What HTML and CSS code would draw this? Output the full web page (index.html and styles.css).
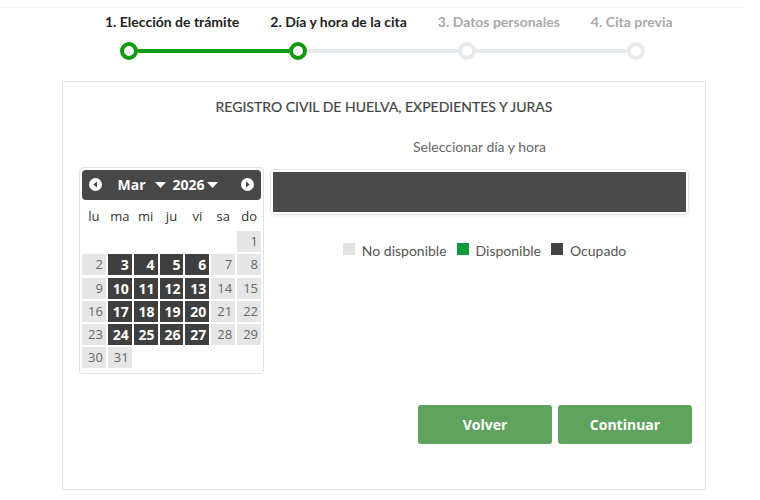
FILE: index.html
```html
<!DOCTYPE html>
<html lang="es">
<head>
    <meta charset="UTF-8">
    <meta name="viewport" content="width=device-width, initial-scale=1.0">
    <title>Cita previa - Registro Civil</title>
    <link rel="stylesheet" href="styles.css">
</head>
<body>
    <div class="franja"></div>

    <div class="pasos">
        <div class="pasos-textos">
            <span class="paso hecho">1. Elección de trámite</span>
            <span class="paso hecho">2. Día y hora de la cita</span>
            <span class="paso">3. Datos personales</span>
            <span class="paso">4. Cita previa</span>
        </div>
        <div class="pasos-barra">
            <span class="punto activo"></span>
            <span class="linea activa"></span>
            <span class="punto activo"></span>
            <span class="linea"></span>
            <span class="punto"></span>
            <span class="linea"></span>
            <span class="punto"></span>
        </div>
    </div>

    <main class="panel">
        <h1 class="titulo">REGISTRO CIVIL DE HUELVA, EXPEDIENTES Y JURAS</h1>

        <div class="contenido">
            <div class="calendario">
                <div class="cal-cabecera">
                    <svg class="flecha" width="13" height="13" viewBox="0 0 14 14">
                        <circle cx="7" cy="7" r="7" fill="#fff"/>
                        <path d="M8.6 3.8 L4.6 7 L8.6 10.2 Z" fill="#484848"/>
                    </svg>
                    <div class="cal-selects">
                        <span class="cal-mes">Mar</span>
                        <svg class="caret" width="11" height="6" viewBox="0 0 11 6"><path d="M0 0 H11 L5.5 6 Z" fill="#fff"/></svg>
                        <span class="cal-anio">2026</span>
                        <svg class="caret" width="11" height="6" viewBox="0 0 11 6"><path d="M0 0 H11 L5.5 6 Z" fill="#fff"/></svg>
                    </div>
                    <svg class="flecha" width="13" height="13" viewBox="0 0 14 14">
                        <circle cx="7" cy="7" r="7" fill="#fff"/>
                        <path d="M5.4 3.8 L9.4 7 L5.4 10.2 Z" fill="#484848"/>
                    </svg>
                </div>
                <div class="cal-semana">
                    <span>lu</span><span>ma</span><span>mi</span><span>ju</span><span>vi</span><span>sa</span><span>do</span>
                </div>
                <div class="cal-dias" id="dias"></div>
            </div>

            <div class="horas">
                <p class="horas-titulo">Seleccionar día y hora</p>
                <div class="horas-caja">
                    <div class="horas-barra"></div>
                </div>
                <div class="leyenda">
                    <span class="cuadro gris"></span><span class="leyenda-texto">No disponible</span>
                    <span class="cuadro verde"></span><span class="leyenda-texto">Disponible</span>
                    <span class="cuadro oscuro"></span><span class="leyenda-texto">Ocupado</span>
                </div>
            </div>
        </div>

        <div class="botones">
            <button class="boton">Volver</button>
            <button class="boton">Continuar</button>
        </div>
    </main>

    <script>
        // marzo 2026 empieza en domingo
        const dias = document.getElementById('dias');
        const ocupados = [3, 4, 5, 6, 10, 11, 12, 13, 17, 18, 19, 20, 24, 25, 26, 27];

        for (let i = 0; i < 6; i++) {
            dias.appendChild(document.createElement('span'));
        }
        for (let d = 1; d <= 31; d++) {
            const celda = document.createElement('span');
            celda.classList.add('dia');
            if (ocupados.includes(d)) {
                celda.classList.add('ocupado');
            }
            celda.textContent = d;
            dias.appendChild(celda);
        }
    </script>
</body>
</html>
```

FILE: styles.css
```css
body {
    margin: 0;
    padding: 0;
    font-family: "Lato", "Noto Sans", sans-serif;
    background-color: #fff;
    color: #555;
}
.franja {
    width: 745px;
    height: 7px;
    border-bottom: 1px solid #f1f2f3;
}
.pasos {
    padding-top: 5px;
    height: 68px;
}
.pasos-textos {
    display: flex;
    gap: 31px;
    padding-left: 105px;
}
.paso {
    font-size: 14px;
    font-weight: bold;
    line-height: 17px;
    color: #aaa;
}
.paso.hecho {
    color: #222;
}
.pasos-barra {
    display: flex;
    align-items: center;
    margin-top: 12px;
    padding-left: 120px;
}
.punto {
    width: 10px;
    height: 10px;
    border: 4px solid #e6eaee;
    border-radius: 50%;
    background-color: #fff;
    flex-shrink: 0;
}
.punto.activo {
    border-color: #109a10;
}
.linea {
    width: 151px;
    height: 4px;
    background-color: #e6eaee;
}
.linea.activa {
    background-color: #109a10;
}
.panel {
    margin-left: 62px;
    width: 644px;
    height: 409px;
    border: 1px solid #dae3ea;
    box-shadow: 0 1px 2px rgba(0, 0, 0, 0.06);
    padding: 0 16px;
    box-sizing: border-box;
}
.titulo {
    margin: 0;
    padding-top: 15px;
    font-size: 14px;
    line-height: 20px;
    font-weight: normal;
    text-align: center;
    color: #444;
    -webkit-text-stroke: 0.2px #444;
}
.contenido {
    display: grid;
    grid-template-columns: 185px 1fr;
    column-gap: 6px;
    margin-top: 11px;
}
.calendario {
    margin-top: 39px;
    height: 207px;
    border: 1px solid #e2e2e2;
    border-radius: 4px;
    padding: 2px;
    box-sizing: border-box;
    font-family: "Open Sans", sans-serif;
}
.cal-cabecera {
    display: flex;
    align-items: center;
    justify-content: space-between;
    height: 30px;
    padding: 0 7px 2px 7px;
    box-sizing: border-box;
    background-color: #484848;
    border-radius: 4px;
}
.cal-selects {
    display: flex;
    align-items: center;
    color: #fff;
    font-size: 14px;
    font-weight: bold;
    margin-right: 8px;
}
.cal-mes {
    margin-right: 10px;
}
.caret {
    margin-top: 2px;
}
.cal-anio {
    margin: 0 2px 0 6px;
}
.cal-semana {
    display: grid;
    grid-template-columns: repeat(7, 1fr);
    column-gap: 2px;
    height: 30px;
    padding-top: 2px;
    box-sizing: border-box;
    align-items: center;
    font-size: 13px;
    color: #333;
    text-align: center;
}
.cal-dias {
    display: grid;
    grid-template-columns: repeat(7, 1fr);
    column-gap: 2px;
    row-gap: 2.3px;
    margin-top: 1px;
}
.dia {
    height: 21px;
    line-height: 21px;
    padding-right: 3px;
    text-align: right;
    font-size: 13px;
    background-color: #e6e6e6;
    color: #666;
}
.dia.ocupado {
    background-color: #3f3f3f;
    color: #fff;
    font-weight: bold;
    font-size: 14px;
}
.horas-titulo {
    margin: 9px 0 0 0;
    font-size: 14px;
    line-height: 20px;
    text-align: center;
    color: #666;
}
.horas-caja {
    margin-top: 12px;
    border: 1px solid #e0e6ea;
    border-radius: 4px;
    padding: 2px;
    box-shadow: 0 1px 3px rgba(0, 0, 0, 0.08);
}
.horas-barra {
    height: 40px;
    background-color: #4a4a4a;
}
.leyenda {
    display: flex;
    align-items: center;
    justify-content: center;
    margin-top: 27px;
    padding-left: 20px;
    font-size: 14px;
    color: #555;
}
.cuadro {
    width: 12px;
    height: 12px;
    margin-top: -3px;
    margin-right: 7px;
}
.cuadro.gris {
    background-color: #e3e3e3;
}
.cuadro.verde {
    background-color: #0b9a3c;
}
.cuadro.oscuro {
    background-color: #444;
}
.leyenda-texto {
    margin-right: 10px;
}
.botones {
    display: flex;
    justify-content: flex-end;
    gap: 6px;
    margin-top: 31px;
    margin-right: -3px;
}
.boton {
    width: 134px;
    height: 39px;
    background-color: #5fa35f;
    border: none;
    border-radius: 3px;
    color: #fff;
    font-family: "Open Sans", sans-serif;
    font-size: 14px;
    font-weight: bold;
    cursor: pointer;
}
```
